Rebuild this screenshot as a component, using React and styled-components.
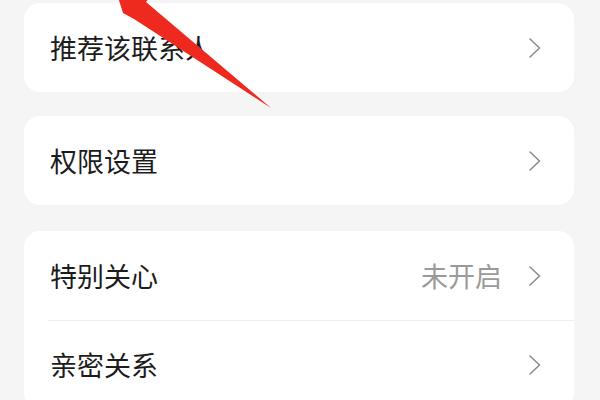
import React from "react";
import styled, { createGlobalStyle } from "styled-components";

const Global = createGlobalStyle`
  html, body { margin: 0; padding: 0; background: #f5f5f5; }
  body { font-family: "Noto Sans CJK SC", "Noto Sans", sans-serif; }
`;

const Page = styled.div`
  position: relative;
  width: 600px;
  height: 400px;
  overflow: hidden;
  box-sizing: border-box;
  padding: 3px 26px 0 24px;
  display: flex;
  flex-direction: column;
  gap: ${(p) => p.$gap}px;
  background: #f5f5f5;
`;

const Card = styled.div`
  background: #ffffff;
  border-radius: 16px;
  display: flex;
  flex-direction: column;
  flex-shrink: 0;
  margin-bottom: ${(p) => p.$mb || 0}px;
`;

const Row = styled.div`
  height: 89px;
  box-sizing: border-box;
  display: flex;
  align-items: center;
  padding: 0 32px 0 26px;
  position: relative;
  ${(p) =>
    p.$divider &&
    `&::before {
      content: "";
      position: absolute;
      top: 0;
      left: 24px;
      right: 0;
      height: 1px;
      background: #efefef;
    }`}
`;

const Label = styled.span`
  flex: 1;
  font-size: 27px;
  color: #1c1c1c;
  line-height: 1;
`;

const Value = styled.span`
  font-size: 27px;
  color: #9a9a9a;
  line-height: 1;
  margin-right: 26px;
`;

const Chevron = () => (
  <svg width="14" height="22" viewBox="0 0 14 22">
    <path d="M2 2 L11.5 11 L2 20" fill="none" stroke="#8c8c8c" strokeWidth="1.6" strokeLinecap="round" strokeLinejoin="round" />
  </svg>
);

const Arrow = styled.svg`
  position: absolute;
  left: 0;
  top: 0;
  pointer-events: none;
`;

const Item = ({ label, value, divider }) => (
  <Row $divider={divider}>
    <Label>{label}</Label>
    {value && <Value>{value}</Value>}
    <Chevron />
  </Row>
);

export default function App() {
  return (
    <>
      <Global />
      <Page $gap={24}>
        <Card>
          <Item label="推荐该联系人" />
        </Card>
        <Card $mb={2}>
          <Item label="权限设置" />
        </Card>
        <Card>
          <Item label="特别关心" value="未开启" />
          <Item label="亲密关系" divider />
        </Card>
        <Arrow width="600" height="400" viewBox="0 0 600 400">
          <path d="M117 -6 L152 -6 L146 2 L271 108 L134 19 L123 13 Z" fill="#ee2a1f" />
        </Arrow>
      </Page>
    </>
  );
}
